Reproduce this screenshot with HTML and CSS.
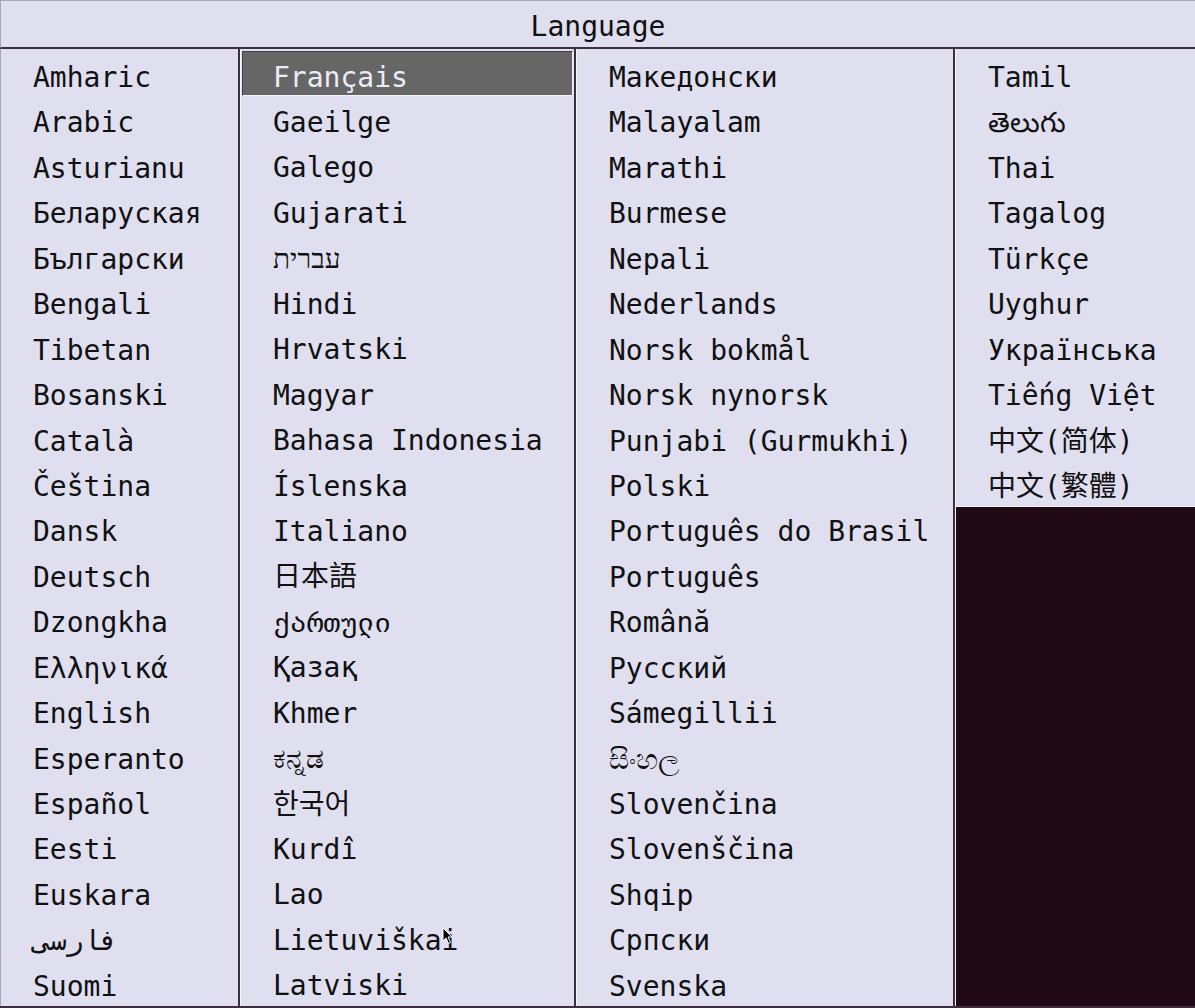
FILE: index.html
```html
<!DOCTYPE html>
<html>
 <head>
  <title>Language</title>
  <meta charset="utf-8">
  <link rel="stylesheet" href="styles.css">
 </head>
 <body>
  <div class="menu">
   <div class="title">Language</div>
   <div class="cols">
    <div class="col col-1">
     <ul class="list">
      <li>Amharic</li>
      <li>Arabic</li>
      <li>Asturianu</li>
      <li>Беларуская</li>
      <li>Български</li>
      <li>Bengali</li>
      <li>Tibetan</li>
      <li>Bosanski</li>
      <li>Català</li>
      <li>Čeština</li>
      <li>Dansk</li>
      <li>Deutsch</li>
      <li>Dzongkha</li>
      <li>Ελληνικά</li>
      <li>English</li>
      <li>Esperanto</li>
      <li>Español</li>
      <li>Eesti</li>
      <li>Euskara</li>
      <li>فارسی</li>
      <li>Suomi</li>
     </ul>
    </div>
    <div class="col col-2">
     <ul class="list">
      <li class="selected">Français</li>
      <li>Gaeilge</li>
      <li>Galego</li>
      <li>Gujarati</li>
      <li>עברית</li>
      <li>Hindi</li>
      <li>Hrvatski</li>
      <li>Magyar</li>
      <li>Bahasa Indonesia</li>
      <li>Íslenska</li>
      <li>Italiano</li>
      <li>日本語</li>
      <li>ქართული</li>
      <li>Қазақ</li>
      <li>Khmer</li>
      <li>ಕನ್ನಡ</li>
      <li>한국어</li>
      <li>Kurdî</li>
      <li>Lao</li>
      <li>Lietuviškai</li>
      <li>Latviski</li>
     </ul>
    </div>
    <div class="col col-3">
     <ul class="list">
      <li>Македонски</li>
      <li>Malayalam</li>
      <li>Marathi</li>
      <li>Burmese</li>
      <li>Nepali</li>
      <li>Nederlands</li>
      <li>Norsk bokmål</li>
      <li>Norsk nynorsk</li>
      <li>Punjabi (Gurmukhi)</li>
      <li>Polski</li>
      <li>Português do Brasil</li>
      <li>Português</li>
      <li>Română</li>
      <li>Русский</li>
      <li>Sámegillii</li>
      <li>සිංහල</li>
      <li>Slovenčina</li>
      <li>Slovenščina</li>
      <li>Shqip</li>
      <li>Српски</li>
      <li>Svenska</li>
     </ul>
    </div>
    <div class="col col-4">
     <ul class="list">
      <li>Tamil</li>
      <li>తెలుగు</li>
      <li>Thai</li>
      <li>Tagalog</li>
      <li>Türkçe</li>
      <li>Uyghur</li>
      <li>Українська</li>
      <li>Tiếng Việt</li>
      <li>中文(简体)</li>
      <li>中文(繁體)</li>
     </ul>
    </div>
   </div>
   <svg class="pointer" width="12" height="18" viewBox="0 0 12 18">
    <path d="M1 1 L1 14 L4 11 L6.5 16.5 L8.5 15.5 L6 10 L10 10 Z" fill="#000" stroke="#fff" stroke-width="1"/>
   </svg>
  </div>
 </body>
</html>
```
FILE: styles.css
```css
html, body
{
 margin: 0;
 padding: 0;
}
body
{
 background: #200a14;
 font-family: "DejaVu Sans Mono", "Noto Sans CJK SC", monospace;
 font-size: 28px;
 color: #111;
}
.menu
{
 position: relative;
 width: 1195px;
 height: 1008px;
 display: flex;
 flex-direction: column;
}
.title
{
 height: 46px;
 line-height: 52px;
 text-align: center;
 background: #dfdfef;
 border-top: 1px solid #a8a6b6;
 border-left: 1px solid #a8a6b6;
 border-bottom: 2px solid #3e2e3e;
}
.cols
{
 flex: 1;
 display: grid;
 grid-template-columns: 240px 336px 379px 1fr;
 border-bottom: 2px solid #3e2e3e;
}
.col
{
 background: #dfdfef;
 border-right: 2px solid #3e2e3e;
 border-left: 1px solid #f6f6fc;
}
.col-1 {border-left-color: #a8a6b6;}
.col-4
{
 background: #200a14;
 border-right: 0;
}
.list
{
 list-style: none;
 margin: 0;
 padding: 2px 0 0;
 background: #dfdfef;
}
.col-4 .list {padding-bottom: 1px; border-bottom: 1px solid #f0f0f8;}
.list li
{
 height: 45.45px;
 line-height: 53px;
 padding-left: 32px;
 white-space: nowrap;
 overflow: hidden;
}
.col-1 .list li {padding-left: 32px;}
.list li.selected
{
 margin: 0 1px 0 1px;
 padding-left: 30px;
 height: 43px;
 line-height: 51px;
 background: #666666;
 color: #ececf4;
 border: 1px solid #404040;
 border-bottom-color: #f4f4fa;
 border-right-color: #f4f4fa;
}
.pointer
{
 position: absolute;
 left: 442px;
 top: 927px;
}
```
